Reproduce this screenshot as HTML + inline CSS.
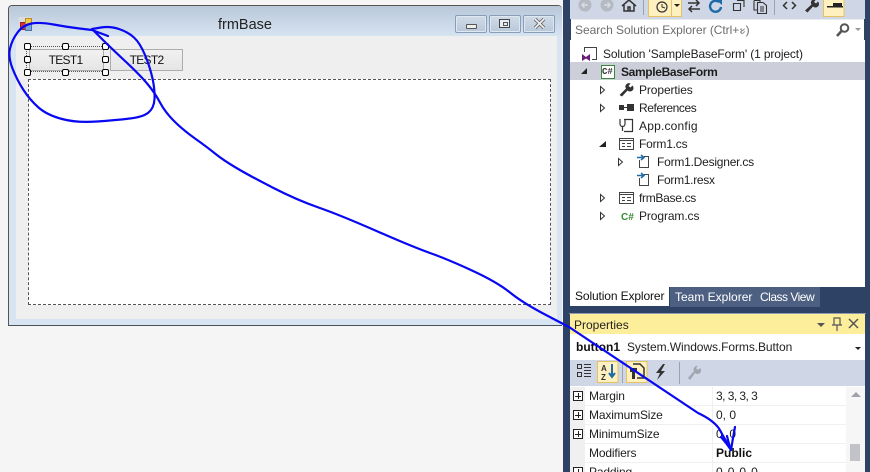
<!DOCTYPE html>
<html><head><meta charset="utf-8">
<style>
html,body{margin:0;padding:0;width:870px;height:472px;overflow:hidden;background:#f5f5f5}
body{position:relative;font-family:"Liberation Sans",sans-serif;font-size:12px;color:#1e1e1e}
.a{position:absolute}
.t{position:absolute;white-space:nowrap;line-height:16px;font-size:12px}
.h{position:absolute;width:5px;height:5px;border:1px solid #000;border-radius:2px;background:#fff}
.wb{position:absolute;top:9px;width:30px;height:16px;border:1px solid #8a9db8;border-radius:2px;background:linear-gradient(#d0dbe8,#b9c8da);box-shadow:inset 0 0 0 1px #dfe7f0}
.row{position:absolute;left:570px;width:276px;height:18px;border-bottom:1px solid #f0f0f0}
.exp{position:absolute;left:3px;top:4px;width:8px;height:8px;border:1px solid #222;background:#fff}
.exp:before{content:"";position:absolute;left:1px;top:3.5px;width:6px;height:1px;background:#222}
.exp:after{content:"";position:absolute;left:3.5px;top:1px;width:1px;height:6px;background:#222}
.nm{position:absolute;left:19px;top:1px;line-height:16px;white-space:nowrap;letter-spacing:-.15px}
.vl{position:absolute;left:146px;top:1px;line-height:16px;white-space:nowrap}
.sep{position:absolute;left:142px;top:0;width:1px;height:19px;background:#f0f0f0}
</style></head><body>

<!-- form window -->
<div class="a" style="left:8px;top:5px;width:554px;height:321px;box-sizing:border-box;border:1px solid #555;border-bottom:1px solid #4a5058;border-right:0;border-radius:4px 4px 0 0;background:#d8e4f1;overflow:hidden">
  <div class="a" style="left:0;top:0;right:0;height:30px;background:linear-gradient(#b9c8d9,#d6e3f1)"></div>
  <div class="a" style="left:7px;top:30px;width:541px;height:283px;background:#efefef"></div>
  <div class="a" style="left:19px;top:73px;width:521px;height:224px;background:#fff;border:1px dashed #555"></div>
  <div class="t" style="left:209px;top:11px;font-size:14.500px;color:#222">frmBase</div>
  <div class="wb" style="left:446px"><div class="a" style="left:10px;top:8px;width:9px;height:3px;border:1px solid #555;background:#eee;border-radius:1px"></div></div>
  <div class="wb" style="left:480px"><div class="a" style="left:9px;top:3px;width:9px;height:7px;border:1px solid #444;background:#e6ecf3"></div><div class="a" style="left:13px;top:6px;width:3px;height:2px;border:1px solid #555"></div></div>
  <div class="wb" style="left:514px"><svg class="a" style="left:9px;top:2px" width="13" height="11"><path d="M2 1L11 10M11 1L2 10" stroke="#666" stroke-width="3.400"/><path d="M2 1L11 10M11 1L2 10" stroke="#f2f2f2" stroke-width="1.600"/></svg></div>
</div>
<!-- form icon -->
<div class="a" style="left:19px;top:17px;width:13px;height:13px;background:#ddd"></div>
<div class="a" style="left:20px;top:22px;width:4px;height:6px;background:#d33;border:1px solid #922"></div>
<div class="a" style="left:25px;top:18px;width:5px;height:5px;background:#f2cc4d;border:1px solid #b98c20"></div>
<div class="a" style="left:25px;top:24px;width:5px;height:5px;background:#7da7dc;border:1px solid #4a73a8"></div>

<!-- buttons -->
<div class="a" style="left:26px;top:46px;width:78px;height:26px;box-sizing:border-box;border:1px dotted #555"></div>
<div class="a" style="left:29px;top:49px;width:71px;height:20px;padding-right:2px;border:1px solid #adadad;background:linear-gradient(#f1f1f1,#e5e5e5);text-align:center;line-height:20px;color:#111;letter-spacing:-.7px">TEST1</div>
<div class="a" style="left:110px;top:49px;width:71px;height:20px;border:1px solid #adadad;background:linear-gradient(#f1f1f1,#e5e5e5);text-align:center;line-height:20px;color:#111;letter-spacing:-.7px">TEST2</div>
<div class="h" style="left:24px;top:43px"></div><div class="h" style="left:62px;top:43px"></div><div class="h" style="left:102px;top:43px"></div>
<div class="h" style="left:24px;top:56px"></div><div class="h" style="left:102px;top:56px"></div>
<div class="h" style="left:24px;top:69px"></div><div class="h" style="left:62px;top:69px"></div><div class="h" style="left:102px;top:69px"></div>

<!-- VS dark panel -->
<div class="a" style="left:563px;top:0;width:307px;height:472px;background:#2e4265"></div>
<div class="a" style="left:570px;top:0;width:295px;height:19px;background:#cfd6e5"></div>
<!-- toolbar -->
<svg class="a" style="left:570px;top:0" width="295" height="19">
  <circle cx="15" cy="5" r="6.500" fill="#b4b9c2"/><path d="M18 5H12M14.500 2.500L12 5L14.500 7.500" stroke="#d8dce4" stroke-width="1.500" fill="none"/>
  <circle cx="37" cy="5" r="6.500" fill="#b4b9c2"/><path d="M34 5H40M37.500 2.500L40 5L37.500 7.500" stroke="#d8dce4" stroke-width="1.500" fill="none"/>
  <path d="M52 6L59 0L66 6M54 5V11H64V5M58 11V7H60V11" stroke="#333" stroke-width="1.500" fill="none"/>
  <rect x="73" y="0" width="1" height="15" fill="#9ba3b0"/>
  <rect x="78.500" y="-1" width="33" height="17.500" fill="#fff0bf" stroke="#e5c365"/><rect x="101" y="0" width="1" height="16" fill="#e5c365"/>
  <circle cx="92" cy="7" r="5" fill="none" stroke="#333" stroke-width="1.200"/><path d="M92 4V7L95 8" stroke="#333" fill="none"/>
  <path d="M104 4H110L107 7Z" fill="#222"/>
  <path d="M118 3H129M126 0L129 3L126 6M130 9H119M122 6L119 9L122 12" stroke="#333" stroke-width="1.500" fill="none"/>
  <path d="M149 2A5.500 5.500 0 1 0 151 7" stroke="#1c6aa8" stroke-width="2.400" fill="none"/><path d="M145 -1H152V5Z" fill="#1c6aa8"/>
  <path d="M167 .5H174V7M163.500 3.500H170.500V10.500H163.500Z" stroke="#333" stroke-width="1.100" fill="none"/>
  <path d="M184 .5H190V2.500M187.500 2.500H193L196.500 5.500V13.500H187.500ZM184 .5V10H187" stroke="#333" stroke-width="1.100" fill="none"/><path d="M190 7H194M190 9H194M190 11H194" stroke="#333"/>
  <rect x="204" y="0" width="1" height="15" fill="#9ba3b0"/>
  <path d="M217 2L213.500 5.500L217 9M222 2L225.500 5.500L222 9" stroke="#333" stroke-width="1.500" fill="none"/>
  <path d="M235 10.500L241.500 4.500A3.500 3.500 0 0 1 246 -.5L244 2L246 3.500L248 1.500A3.500 3.500 0 0 1 243 6.500L237.500 12.500Z" fill="#333"/>
  <rect x="253.500" y="-1" width="20.500" height="17.500" fill="#fff0bf" stroke="#e5c365"/><rect x="257" y="6" width="16" height="1.500" fill="#222"/><rect x="263" y="3" width="9" height="3" fill="#222"/>
</svg>
<!-- search -->
<div class="a" style="left:571px;top:19px;width:293px;height:21px;background:#fff;border-top:1px solid #e8ebf2"></div>
<div class="t" style="left:575px;top:22px;color:#6d6d6d;letter-spacing:-.05px">Search Solution Explorer (Ctrl+ะ)</div>
<svg class="a" style="left:835px;top:22px" width="28" height="16"><circle cx="9.500" cy="6" r="3.800" fill="none" stroke="#555" stroke-width="2"/><path d="M6.500 9L2 14" stroke="#555" stroke-width="2.600"/><path d="M20 6H26L23 9Z" fill="#999"/></svg>

<!-- tree -->
<div class="a" style="left:570px;top:40px;width:295px;height:247px;background:#fff"></div>
<div class="a" style="left:570px;top:62px;width:295px;height:18px;background:#ccced9"></div>
<svg class="a" style="left:570px;top:40px" width="295" height="190">
  <path d="M14.500 12V7.500H26.500V19.500H22" fill="none" stroke="#444"/><path d="M12 21V14L16 17L20 14V21L16 18.500Z" fill="#68217a"/>
  <path d="M11 34L17 28V34Z" fill="#222"/><rect x="31.500" y="25.500" width="13" height="13" fill="#fff" stroke="#388a34"/>
  <path d="M30.500 46.500L34.500 50L30.500 53.500Z M30.500 64.500L34.500 68L30.500 71.500Z M30.500 154.500L34.500 158L30.500 161.500Z M30.500 172.500L34.500 176L30.500 179.500Z M48.500 118.500L52.500 122L48.500 125.500Z" fill="#fff" stroke="#333"/>
  <path d="M29 107L36 101V107Z" fill="#222"/>
  <path d="M49.500 55L56 48.500A3.500 3.500 0 0 1 60.500 43.500L58.500 46L60.500 47.500L62.500 45.500A3.500 3.500 0 0 1 57.500 50.500L52 56.500Z" fill="#333"/>
  <rect x="49" y="65" width="5" height="5" fill="#333"/><rect x="57" y="64" width="7" height="7" fill="#333"/><rect x="54" y="67" width="3" height="1" fill="#333"/>
  <path d="M54 79.500H62.500V91.500H54M50 79V84A2 2 0 0 0 55 84V79M52.500 86V91" fill="none" stroke="#333" stroke-width="1.200"/>
  <g fill="#fff" stroke="#444"><rect x="49.500" y="98.500" width="14" height="11"/><rect x="49.500" y="152.500" width="14" height="11"/></g>
  <path d="M49 100H64V101H49ZM52 103H55V104H52ZM57 103H61V104H57ZM52 106H55V107H52ZM57 106H61V107H57Z M49 154H64V155H49ZM52 157H55V158H52ZM57 157H61V158H57ZM52 160H55V161H52ZM57 160H61V161H57Z" fill="#444"/>
  <g fill="none" stroke="#444"><path d="M69.500 120V127.500H78.500V116.500H74"/><path d="M69.500 138V145.500H78.500V134.500H74"/></g>
  <path d="M67 117.500H73M71 115L74 117.500L71 120M67 135.500H73M71 133L74 135.500L71 138" fill="none" stroke="#1c6aa8" stroke-width="1.500"/>
  <text x="51" y="180" font-family="Liberation Sans" font-size="10" font-weight="bold" fill="#388a34">C#</text>
</svg>
<div class="t" style="left:603px;top:46px;letter-spacing:-.13px">Solution 'SampleBaseForm' (1 project)</div>
<div class="a" style="left:602px;top:67px;font-size:9px;font-family:'Liberation Mono',monospace;font-weight:bold;color:#333;line-height:10px">C#</div>
<div class="t" style="left:621px;top:64px;font-weight:bold;letter-spacing:-.35px">SampleBaseForm</div>
<div class="t" style="left:639px;top:82px;letter-spacing:-.1px">Properties</div>
<div class="t" style="left:639px;top:100px;letter-spacing:-.4px">References</div>
<div class="t" style="left:639px;top:118px;letter-spacing:.2px">App.config</div>
<div class="t" style="left:639px;top:136px;letter-spacing:-.2px">Form1.cs</div>
<div class="t" style="left:657px;top:154px;letter-spacing:-.22px">Form1.Designer.cs</div>
<div class="t" style="left:657px;top:172px;letter-spacing:-.3px">Form1.resx</div>
<div class="t" style="left:639px;top:190px;letter-spacing:-.3px">frmBase.cs</div>
<div class="t" style="left:639px;top:208px;letter-spacing:-.1px">Program.cs</div>

<!-- tabs -->
<div class="a" style="left:570px;top:287px;width:99px;height:19px;background:#fff"></div>
<div class="a" style="left:670px;top:287px;width:150px;height:20px;background:#4d6082"></div>
<div class="t" style="left:575px;top:288px;color:#111;letter-spacing:-.12px">Solution Explorer</div>
<div class="t" style="left:675px;top:289px;color:#fff">Team Explorer</div>
<div class="t" style="left:760px;top:289px;color:#fff;letter-spacing:-.5px">Class View</div>

<!-- properties -->
<div class="a" style="left:569px;top:313px;width:297px;height:1px;background:#8e9bb3"></div>
<div class="a" style="left:570px;top:314px;width:295px;height:20px;background:#fdee9b"></div>
<div class="t" style="left:574px;top:317px;color:#222">Properties</div>
<svg class="a" style="left:810px;top:316px" width="50" height="16"><path d="M7 7H15L11 11Z" fill="#555"/><path d="M24 2H30V9H24ZM22 9H32M27 9V15" stroke="#555" fill="none" stroke-width="1.200"/><path d="M39 3L48 12M48 3L39 12" stroke="#555" stroke-width="1.500"/></svg>
<div class="a" style="left:570px;top:334px;width:295px;height:26px;background:#fff"></div>
<div class="t" style="left:576px;top:339px;font-weight:bold;color:#111">button1</div>
<div class="t" style="left:627px;top:339px;color:#222;letter-spacing:-.08px">System.Windows.Forms.Button</div>
<div class="a" style="left:855px;top:347px;width:0;height:0;border:3px solid transparent;border-top:3px solid #222"></div>
<div class="a" style="left:570px;top:360px;width:295px;height:26px;background:#cfd6e5"></div>
<svg class="a" style="left:570px;top:360px" width="160" height="26">
  <g transform="translate(0 -1)">
  <g fill="none" stroke="#333"><rect x="7.500" y="5.500" width="4" height="4"/><rect x="7.500" y="13.500" width="4" height="4"/></g>
  <path d="M14 5H21V6H14ZM14 8H21V9H14ZM14 11H21V12H14ZM14 14H21V15H14ZM14 17H21V18H14Z" fill="#333"/>
  <rect x="27.500" y="2.500" width="20.500" height="21" fill="#fff0bf" stroke="#e5c365"/>
  <text x="31" y="12" font-family="Liberation Sans" font-size="8" font-weight="bold" fill="#333">A</text><text x="31" y="21" font-family="Liberation Sans" font-size="8" font-weight="bold" fill="#333">Z</text>
  <path d="M42 5V17M39 14L42 18L45 14" stroke="#1c6aa8" stroke-width="2" fill="none"/>
  <rect x="52" y="2" width="1" height="22" fill="#9ba3b0"/>
  <rect x="56.500" y="2.500" width="20.500" height="21" fill="#fff0bf" stroke="#e5c365"/>
  <path d="M63 5H70L74 9V19H67" fill="none" stroke="#333" stroke-width="1.500"/><path d="M60 9H67V13H65V20H62V13H60Z" fill="#333"/>
  <path d="M93 5L86 14H90L87 21L95 12H91L95 5Z" fill="#333"/>
  <rect x="109" y="3" width="1" height="22" fill="#9ba3b0"/>
  <path d="M118 19L124 12A3.500 3.500 0 0 1 128 7L126 9L128 11L130 9A3.500 3.500 0 0 1 125 14L120 21Z" fill="#a0a5ae"/>
  </g>
</svg>

<div class="a" style="left:570px;top:386px;width:295px;height:86px;background:#fff"></div>
<div class="a" style="left:570px;top:387px;width:15px;height:85px;background:#f0f0f0"></div>
<div class="a" style="left:846px;top:387px;width:19px;height:85px;background:#f6f6f6"></div>
<div class="row" style="top:387px"><div class="exp"></div><div class="nm">Margin</div><div class="sep"></div><div class="vl" style="letter-spacing:-.55px">3, 3, 3, 3</div></div>
<div class="row" style="top:406px"><div class="exp"></div><div class="nm">MaximumSize</div><div class="sep"></div><div class="vl">0, 0</div></div>
<div class="row" style="top:425px"><div class="exp"></div><div class="nm">MinimumSize</div><div class="sep"></div><div class="vl">0, 0</div></div>
<div class="row" style="top:444px"><div class="nm">Modifiers</div><div class="sep"></div><div class="vl" style="font-weight:bold;color:#111">Public</div></div>
<div class="row" style="top:463px"><div class="exp"></div><div class="nm">Padding</div><div class="sep"></div><div class="vl" style="letter-spacing:-.55px">0, 0, 0, 0</div></div>
<div class="a" style="left:851px;top:392px;width:0;height:0;border:5px solid transparent;border-top:0;border-bottom:5px solid #a0a3ab"></div>
<div class="a" style="left:850px;top:444px;width:10px;height:17px;background:#c2c3c9"></div>

<!-- blue annotation -->
<svg class="a" style="left:0;top:0" width="870" height="472">
  <g fill="none" stroke="#0808f2" stroke-width="2.200" stroke-linejoin="round" stroke-linecap="round">
  <path d="M108 36L92 30L79.500 28.500Q67 27 53.500 24.500Q40 22 31.500 23.500Q23 25 17.500 32.500Q12 40 10 48.500Q8 57 12.500 68.500Q17 80 23.500 90Q30 100 38.500 107.500Q47 115 62 119Q77 123 97 121.500Q117 120 130 118.500Q143 117 148.500 112.500Q154 108 154.500 99Q155 90 152.500 78.500Q150 67 145 55Q140 43 134 37.500Q128 32 119 29Q110 26 101 27.500L92 29L101 38Q110 47 125 61Q140 75 147.500 84Q155 93 160 102.500Q165 112 174 121Q183 130 195 138.500Q207 147 215 153.500Q223 160 236.500 168Q250 176 273.500 188Q297 200 318.500 207.500Q340 215 376.500 231Q413 247 430 253Q447 259 472 270.500Q497 282 510 292.500Q523 303 546 315L569 327L698 413Q713 420 719 428.500L731 450"/>
  <path d="M735 427L733 438L731 450L726 443L721 437"/>
  <path d="M727 436L729 444L731 450"/>
  </g>
</svg>
</body></html>
